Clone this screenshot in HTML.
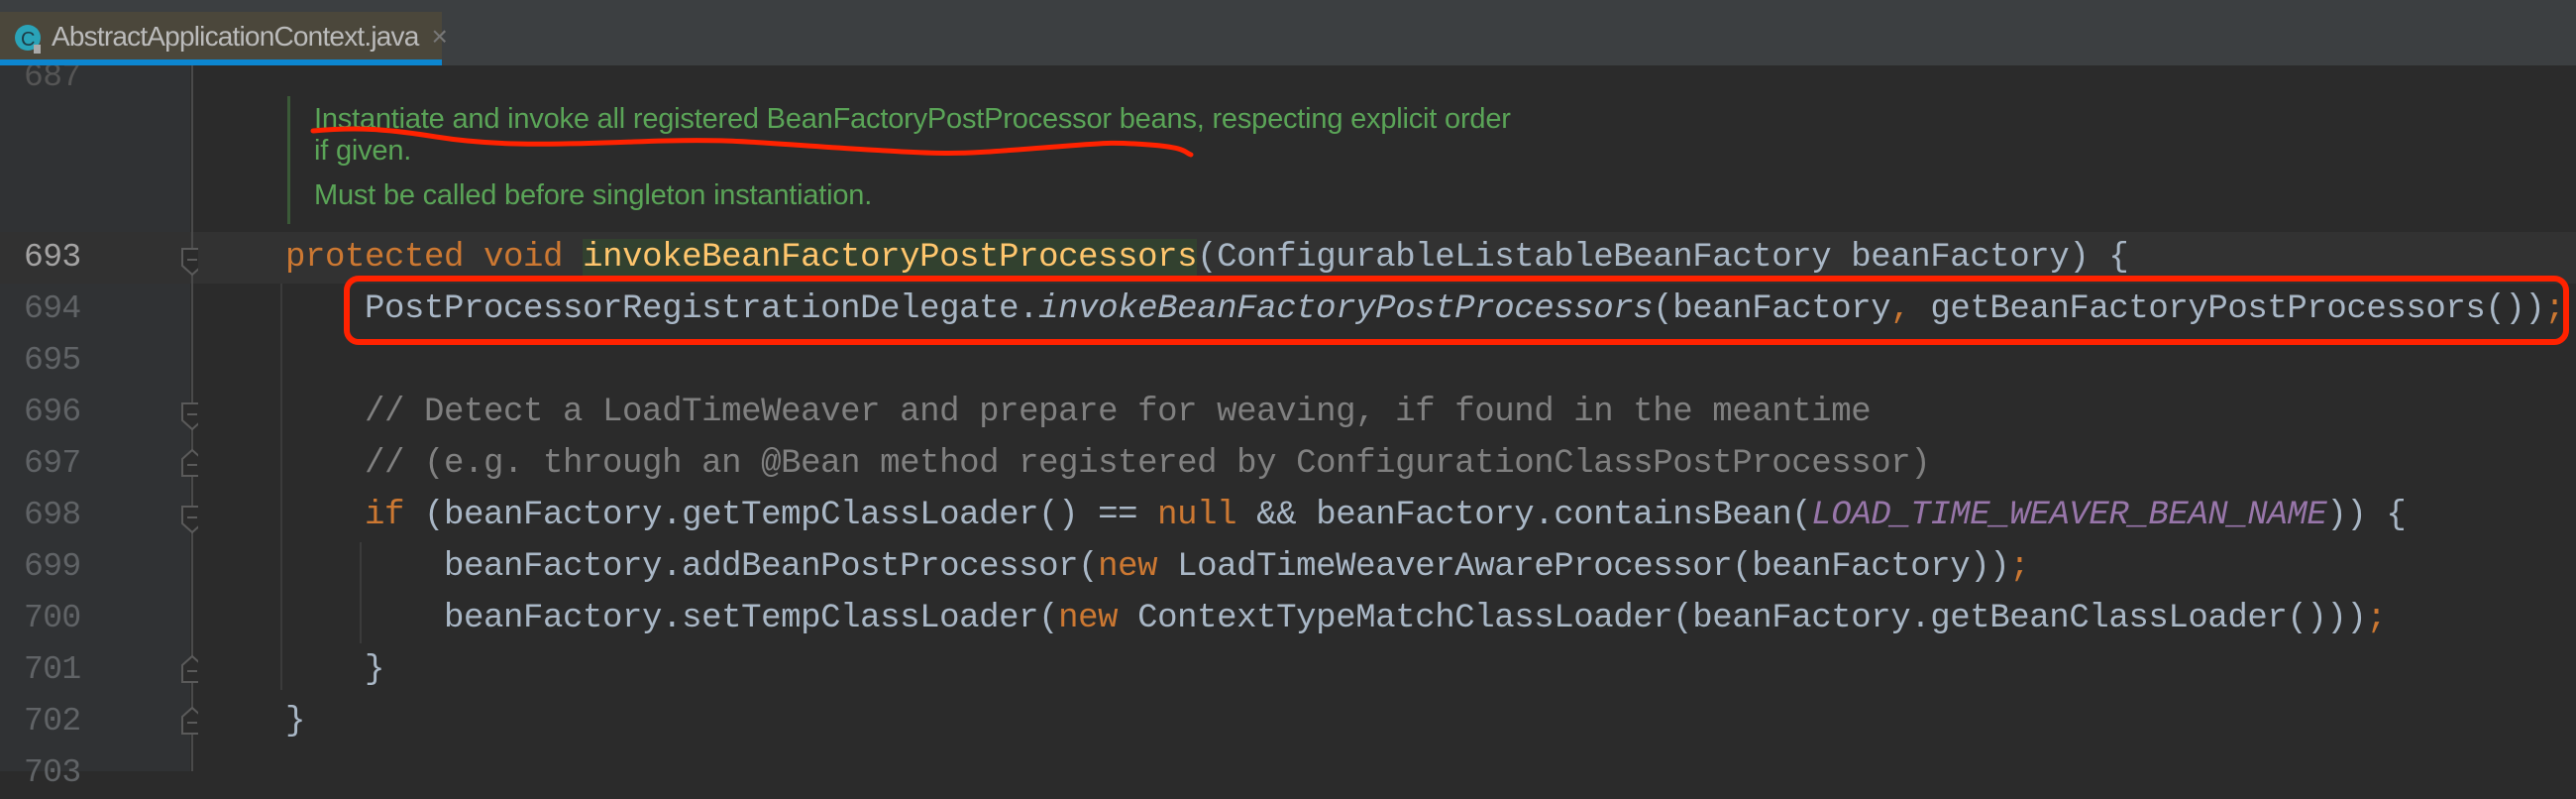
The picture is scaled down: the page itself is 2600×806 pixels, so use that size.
<!DOCTYPE html>
<html><head><meta charset="utf-8"><style>
*{margin:0;padding:0;box-sizing:border-box}
body{width:2600px;height:778px;overflow:hidden;background:#2b2b2b;position:relative;font-family:"Liberation Mono","DejaVu Sans Mono",monospace}
#top{position:absolute;left:0;top:0;width:2600px;height:66px;background:#3c3f41}
#tab{position:absolute;left:0;top:12px;width:446px;height:48px;background:#4b473b}
#tabline{position:absolute;left:0;top:60px;width:446px;height:6px;background:#0c86d0}
#tabtxt{position:absolute;left:52px;top:21px;font:28px "Liberation Sans",sans-serif;color:#bbbbbb;letter-spacing:-0.8px}
#gutter{position:absolute;left:0;top:66px;width:192px;height:712px;background:#303234}
#cur{position:absolute;left:0;top:234px;width:2600px;height:52px;background:#323232}
#curg{position:absolute;left:0;top:234px;width:192px;height:52px;background:#313131}
.ln{position:absolute;left:24px;width:80px;font-size:33px;color:#606366;line-height:52px;letter-spacing:-0.6px}
.code{position:absolute;left:288px;font-size:34px;line-height:52px;color:#a9b7c6;white-space:pre;letter-spacing:-0.4px}
.k{color:#cc7832}.c{color:#808080}.p{color:#9876aa;font-style:italic}.i{font-style:italic}
.m{color:#ffc66d;background:#32412f}
.doc{position:absolute;left:317px;font:29px "Liberation Sans",sans-serif;color:#5aa457;letter-spacing:-0.2px}
.v{position:absolute;width:2px;background:#3b3b3b}
</style></head><body>
<div id="top"></div><div id="tab"></div><div id="tabline"></div>
<svg style="position:absolute;left:8px;top:20px" width="40" height="36"><circle cx="20" cy="18" r="13" fill="#2aa3b8"/><text x="13" y="26" font-family="Liberation Sans" font-size="20" fill="#1d3a44">C</text><rect x="26" y="25" width="7" height="9" fill="#aaa"/></svg>
<div id="tabtxt">AbstractApplicationContext.java <span style="color:#777;margin-left:6px">×</span></div>
<div id="gutter"></div>
<div id="cur"></div><div id="curg"></div>
<div class="ln" style="top:52px;color:#555">687</div>
<div style="position:absolute;left:0;top:0;width:2600px;height:12px;background:#3c3f41"></div>
<div style="position:absolute;left:0;top:12px;width:446px;height:48px;background:#4b473b"></div>
<div style="position:absolute;left:0;top:60px;width:446px;height:6px;background:#0c86d0"></div>
<svg style="position:absolute;left:8px;top:20px" width="40" height="36"><circle cx="20" cy="18" r="13" fill="#2aa3b8"/><text x="13" y="26" font-family="Liberation Sans" font-size="20" fill="#1d3a44">C</text><rect x="26" y="25" width="7" height="9" fill="#aaa"/></svg>
<div style="position:absolute;left:52px;top:21px;font:28px 'Liberation Sans',sans-serif;color:#bbbbbb;letter-spacing:-0.8px">AbstractApplicationContext.java <span style="color:#777;margin-left:6px">×</span></div>
<div style="position:absolute;left:290px;top:97px;width:3px;height:129px;background:#3b5a38"></div>
<div class="doc" style="top:104px">Instantiate and invoke all registered BeanFactoryPostProcessor beans, respecting explicit order</div>
<div class="doc" style="top:136px">if given.</div>
<div class="doc" style="top:181px">Must be called before singleton instantiation.</div>
<div class="v" style="left:193px;top:66px;height:712px;background:#4a4a4a"></div>
<div class="v" style="left:283px;top:286px;height:410px"></div>
<div class="v" style="left:363px;top:547px;height:102px"></div>
<div class="ln" style="top:234px;color:#a4a3a3">693</div>
<div class="ln" style="top:286px">694</div>
<div class="ln" style="top:338px">695</div>
<div class="ln" style="top:390px">696</div>
<div class="ln" style="top:442px">697</div>
<div class="ln" style="top:494px">698</div>
<div class="ln" style="top:546px">699</div>
<div class="ln" style="top:598px">700</div>
<div class="ln" style="top:650px">701</div>
<div class="ln" style="top:702px">702</div>
<div class="ln" style="top:754px">703</div>
<svg style="position:absolute;left:0;top:0" width="200" height="778">
<g fill="#2b2b2b" stroke="#5a5a5a" stroke-width="2">
<path d="M184 251h20v17l-10 9l-10-9z"/><path d="M184 407h20v17l-10 9l-10-9z"/><path d="M184 511h20v17l-10 9l-10-9z"/>
<path d="M184 480h20v-17l-10-9l-10 9z"/><path d="M184 688h20v-17l-10-9l-10 9z"/><path d="M184 740h20v-17l-10-9l-10 9z"/>
</g><g stroke="#5a5a5a" stroke-width="2"><path d="M189 262h10M189 418h10M189 522h10M189 469h10M189 677h10M189 729h10"/></g></svg>
<div class="code" style="top:234px"><span class="k">protected void </span><span class="m">invokeBeanFactoryPostProcessors</span>(ConfigurableListableBeanFactory beanFactory) {</div>
<div class="code" style="top:286px">    PostProcessorRegistrationDelegate.<span class="i">invokeBeanFactoryPostProcessors</span>(beanFactory<span class="k">, </span>getBeanFactoryPostProcessors())<span class="k">;</span></div>
<div class="code c" style="top:390px">    // Detect a LoadTimeWeaver and prepare for weaving, if found in the meantime</div>
<div class="code c" style="top:442px">    // (e.g. through an @Bean method registered by ConfigurationClassPostProcessor)</div>
<div class="code" style="top:494px">    <span class="k">if </span>(beanFactory.getTempClassLoader() == <span class="k">null </span>&amp;&amp; beanFactory.containsBean(<span class="p">LOAD_TIME_WEAVER_BEAN_NAME</span>)) {</div>
<div class="code" style="top:546px">        beanFactory.addBeanPostProcessor(<span class="k">new </span>LoadTimeWeaverAwareProcessor(beanFactory))<span class="k">;</span></div>
<div class="code" style="top:598px">        beanFactory.setTempClassLoader(<span class="k">new </span>ContextTypeMatchClassLoader(beanFactory.getBeanClassLoader()))<span class="k">;</span></div>
<div class="code" style="top:650px">    }</div>
<div class="code" style="top:702px">}</div>
<svg style="position:absolute;left:0;top:0" width="2600" height="778">
<path d="M316 132C360 128 390 130 440 138S540 147 640 143S760 144 860 150S960 156 1040 150S1120 143 1160 146S1195 154 1202 156" fill="none" stroke="#ff2200" stroke-width="5" stroke-linecap="round"/>
<rect x="350" y="281" width="2240" height="64" rx="12" fill="none" stroke="#ff2200" stroke-width="6"/>
</svg>
</body></html>
